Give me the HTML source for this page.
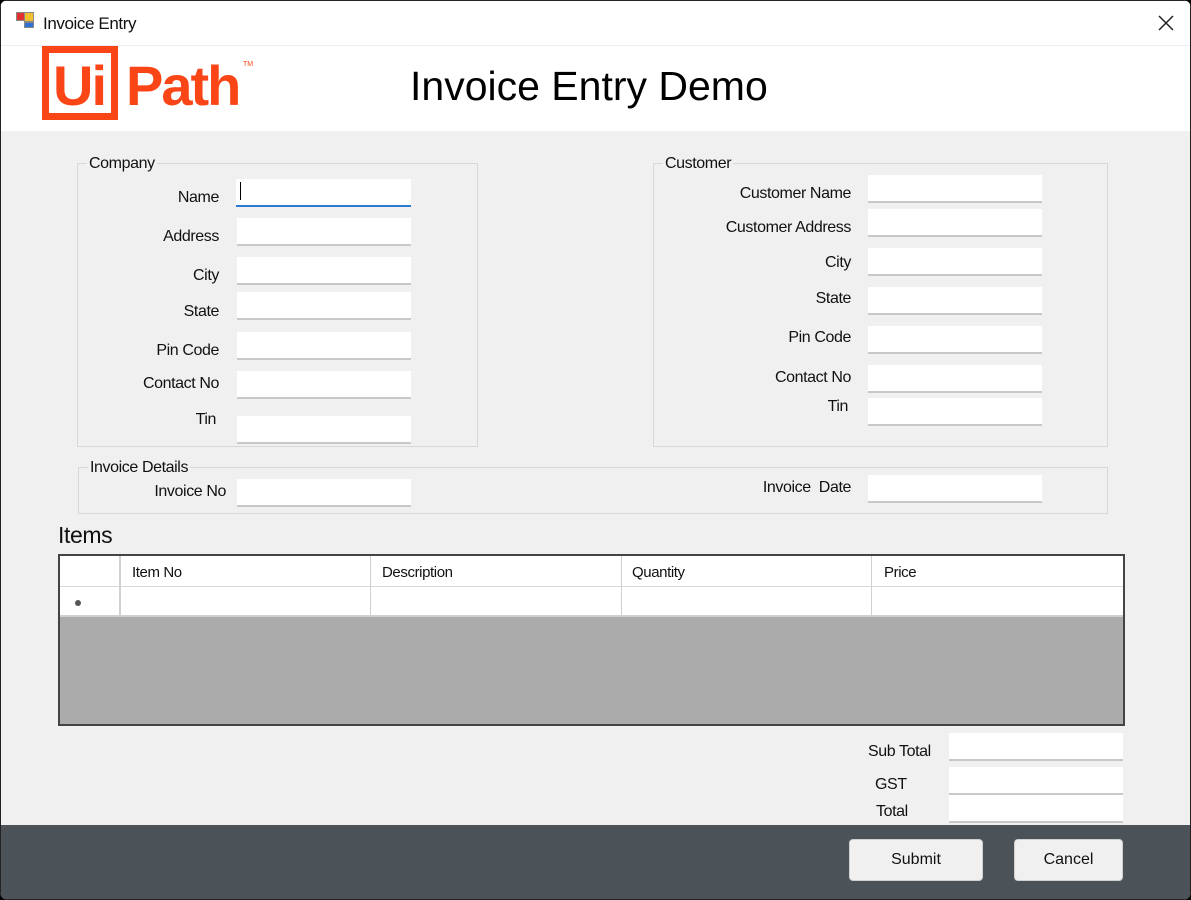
<!DOCTYPE html>
<html><head><style>
*{margin:0;padding:0;box-sizing:border-box}
body{width:1191px;height:900px;background:#000;font-family:"Liberation Sans",Arial,sans-serif;overflow:hidden;position:relative}
.win{position:absolute;left:0;top:0;width:1191px;height:900px;background:#f0f0f0;border-radius:8px;overflow:hidden;box-shadow:inset 0 0 0 1px #222}
.a{position:absolute}
.lbl{position:absolute;font-size:16px;color:#111;white-space:nowrap;letter-spacing:-0.4px}
.r{text-align:right}
.tb{position:absolute;background:#fff;border-bottom:2px solid #c8c8c8;height:28px}
.grp{position:absolute;border:1px solid #d8d8d8}
.gl{position:absolute;background:#f0f0f0;font-size:16px;padding:0 2px;color:#111;letter-spacing:-0.4px}
.btn{position:absolute;background:#f0f0f0;border:1px solid #d0d0d0;border-radius:4px;font-size:16px;text-align:center;line-height:40px;color:#111}
</style></head><body>
<div class="win">
<div class="a" style="left:1px;top:1px;width:1189px;height:130px;background:#fff"></div>
<div class="a" style="left:1px;top:45px;width:1189px;height:1px;background:#e8eef4"></div>
<div class="a" style="left:16px;top:12px;width:9px;height:9px;background:#e03030;border:1px solid #888"></div>
<div class="a" style="left:24px;top:12px;width:10px;height:10px;background:#f0c030;border:1px solid #888"></div>
<div class="a" style="left:24px;top:22px;width:10px;height:6px;background:#3070d0;border:1px solid #888"></div>
<div class="lbl" style="left:43px;top:14px;font-size:17px">Invoice Entry</div>
<svg class="a" style="left:1158px;top:15px" width="16" height="16"><path d="M1 1L15 15M15 1L1 15" stroke="#222" stroke-width="1.5"/></svg>
<div class="a" style="left:42px;top:46px;width:76px;height:74px;border:7px solid #fa4616"></div>
<div class="a" style="left:53px;top:53px;font-size:56px;font-weight:bold;color:#fa4616;letter-spacing:-2px">Ui</div>
<div class="a" style="left:126px;top:53px;font-size:56px;font-weight:bold;color:#fa4616;letter-spacing:-2px">Path</div>
<div class="a" style="left:243px;top:61px;font-size:7px;color:#fa4616">TM</div>
<div class="a" style="left:410px;top:63px;font-size:41px;color:#000;letter-spacing:0px">Invoice Entry Demo</div>

<div class="grp" style="left:77px;top:163px;width:401px;height:284px"></div>
<div class="gl" style="left:87px;top:155px">Company</div>
<div class="lbl r" style="left:100px;width:119px;top:189px">Name</div>
<div class="tb" style="left:236px;top:179px;width:175px;border-bottom:2px solid #2b7ad0"></div>
<div class="a" style="left:240px;top:182px;width:1px;height:18px;background:#000"></div>
<div class="lbl r" style="left:100px;width:119px;top:228px">Address</div><div class="tb" style="left:237px;top:218px;width:174px"></div>
<div class="lbl r" style="left:100px;width:119px;top:267px">City</div><div class="tb" style="left:237px;top:257px;width:174px"></div>
<div class="lbl r" style="left:100px;width:119px;top:303px">State</div><div class="tb" style="left:237px;top:292px;width:174px"></div>
<div class="lbl r" style="left:100px;width:119px;top:342px">Pin Code</div><div class="tb" style="left:237px;top:332px;width:174px"></div>
<div class="lbl r" style="left:100px;width:119px;top:375px">Contact No</div><div class="tb" style="left:237px;top:371px;width:174px"></div>
<div class="lbl r" style="left:100px;width:116px;top:411px">Tin</div><div class="tb" style="left:237px;top:416px;width:174px"></div>

<div class="grp" style="left:653px;top:163px;width:455px;height:284px"></div>
<div class="gl" style="left:663px;top:155px">Customer</div>
<div class="lbl r" style="left:660px;width:191px;top:185px">Customer Name</div><div class="tb" style="left:868px;top:175px;width:174px"></div>
<div class="lbl r" style="left:660px;width:191px;top:219px">Customer Address</div><div class="tb" style="left:868px;top:209px;width:174px"></div>
<div class="lbl r" style="left:660px;width:191px;top:254px">City</div><div class="tb" style="left:868px;top:248px;width:174px"></div>
<div class="lbl r" style="left:660px;width:191px;top:290px">State</div><div class="tb" style="left:868px;top:287px;width:174px"></div>
<div class="lbl r" style="left:660px;width:191px;top:329px">Pin Code</div><div class="tb" style="left:868px;top:326px;width:174px"></div>
<div class="lbl r" style="left:660px;width:191px;top:369px">Contact No</div><div class="tb" style="left:868px;top:365px;width:174px"></div>
<div class="lbl r" style="left:660px;width:188px;top:398px">Tin</div><div class="tb" style="left:868px;top:398px;width:174px"></div>

<div class="grp" style="left:78px;top:467px;width:1030px;height:47px"></div>
<div class="gl" style="left:88px;top:459px">Invoice Details</div>
<div class="lbl r" style="left:100px;width:126px;top:483px">Invoice No</div><div class="tb" style="left:237px;top:479px;width:174px"></div>
<div class="lbl r" style="left:700px;width:151px;top:479px">Invoice &nbsp;Date</div><div class="tb" style="left:868px;top:475px;width:174px"></div>

<div class="lbl" style="left:58px;top:522px;font-size:23px">Items</div>
<div class="a" style="left:58px;top:554px;width:1067px;height:172px;border:2px solid #444;background:#ababab"></div>
<div class="a" style="left:60px;top:556px;width:1063px;height:60px;background:#fff"></div>
<div class="a" style="left:60px;top:586px;width:1063px;height:1px;background:#d8d8d8"></div>
<div class="a" style="left:60px;top:615px;width:1063px;height:2px;background:#d0d0d0"></div>
<div class="a" style="left:119px;top:556px;width:2px;height:60px;background:#d0d0d0"></div>
<div class="a" style="left:370px;top:556px;width:1px;height:60px;background:#d0d0d0"></div>
<div class="a" style="left:621px;top:556px;width:1px;height:60px;background:#d0d0d0"></div>
<div class="a" style="left:871px;top:556px;width:1px;height:60px;background:#d0d0d0"></div>
<div class="lbl" style="left:132px;top:564px;font-size:15px">Item No</div>
<div class="lbl" style="left:382px;top:564px;font-size:15px">Description</div>
<div class="lbl" style="left:632px;top:564px;font-size:15px">Quantity</div>
<div class="lbl" style="left:884px;top:564px;font-size:15px">Price</div>
<div class="a" style="left:75px;top:600px;width:6px;height:6px;border-radius:50%;background:#555"></div>

<div class="lbl" style="left:868px;top:743px">Sub Total</div><div class="tb" style="left:949px;top:733px;width:174px"></div>
<div class="lbl" style="left:875px;top:776px">GST</div><div class="tb" style="left:949px;top:767px;width:174px"></div>
<div class="lbl" style="left:876px;top:803px">Total</div><div class="tb" style="left:949px;top:795px;width:174px"></div>

<div class="a" style="left:1px;top:825px;width:1189px;height:74px;background:#4b5359"></div>
<div class="btn" style="left:849px;top:839px;width:134px;height:42px">Submit</div>
<div class="btn" style="left:1014px;top:839px;width:109px;height:42px">Cancel</div>
</div>
</body></html>
